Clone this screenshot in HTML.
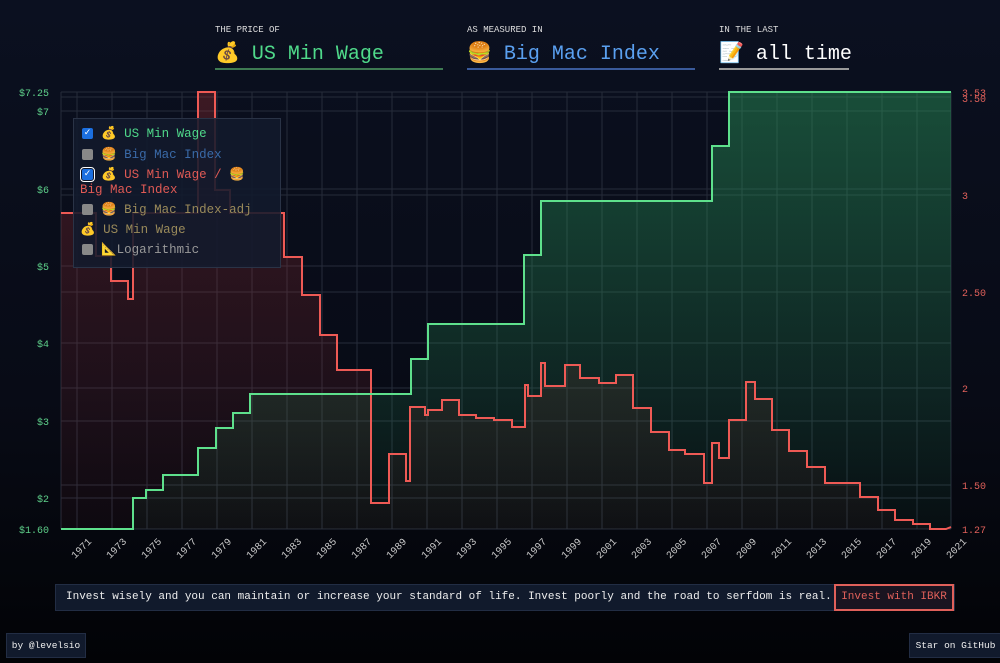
<!DOCTYPE html>
<html><head><meta charset="utf-8"><style>
html,body{margin:0;padding:0;width:1000px;height:663px;overflow:hidden;background:linear-gradient(#0b1020 0%,#080b16 60%,#020306 100%);font-family:"Liberation Mono",monospace;}
.lab{position:absolute;top:25px;font-size:9px;color:#ddd;}
.big{position:absolute;top:40px;font-size:20px;}
.ul{position:absolute;top:68px;height:2px;}
.leg{position:absolute;left:73px;top:118px;width:206px;height:148px;background:rgba(18,26,44,0.88);border:1px solid #2a3346;font-size:12.5px;}
.leg div{position:absolute;white-space:nowrap;}
.cb{display:inline-block;width:11px;height:11px;border-radius:2px;background:#888;vertical-align:middle;margin-right:8px;}
.cbon{background:#1b6fe0;color:#fff;font-size:9px;line-height:11px;text-align:center;}
.bar{position:absolute;left:55px;top:584px;width:898px;height:25px;background:#111a2c;border:1px solid #222d44;}
.bar span{position:absolute;left:10px;top:6px;font-size:11px;color:#eee;white-space:nowrap;}
.btn{position:absolute;right:0;top:-1px;height:23px;width:116px;border:2px solid #e0605a;color:#e0605a;font-size:11px;line-height:23px;text-align:center;background:#1a1420;}
.foot{position:absolute;top:633px;height:23px;background:#111a2c;border:1px solid #222d44;color:#eee;font-size:9.5px;line-height:23px;text-align:center;}
</style></head><body>
<div class="lab" style="left:215px">THE PRICE OF</div>
<div class="lab" style="left:467px">AS MEASURED IN</div>
<div class="lab" style="left:719px">IN THE LAST</div>
<div class="big" style="left:215px;color:#4fd98a">💰 US Min Wage</div>
<div class="big" style="left:467px;color:#5aa0f0">🍔 Big Mac Index</div>
<div class="big" style="left:719px;color:#fff">📝 all time</div>
<div class="ul" style="left:215px;width:228px;background:#3e7a52"></div>
<div class="ul" style="left:467px;width:228px;background:#3a5a9a"></div>
<div class="ul" style="left:719px;width:130px;background:#999"></div>

<svg width="1000" height="663" style="position:absolute;left:0;top:0" xmlns="http://www.w3.org/2000/svg">
<defs>
<linearGradient id="gg" x1="0" y1="0" x2="0" y2="1"><stop offset="0" stop-color="#2a9a5a" stop-opacity="0.45"/><stop offset="1" stop-color="#2a9a5a" stop-opacity="0.05"/></linearGradient>
<linearGradient id="rg" x1="0" y1="0" x2="0" y2="1"><stop offset="0" stop-color="#b03030" stop-opacity="0.3"/><stop offset="1" stop-color="#b03030" stop-opacity="0.05"/></linearGradient>
</defs>
<g stroke="#262c3a" stroke-width="1">
<line x1="61" y1="92" x2="951" y2="92"/><line x1="61" y1="97" x2="951" y2="97"/><line x1="61" y1="111" x2="951" y2="111"/><line x1="61" y1="189" x2="951" y2="189"/><line x1="61" y1="195" x2="951" y2="195"/><line x1="61" y1="266" x2="951" y2="266"/><line x1="61" y1="292" x2="951" y2="292"/><line x1="61" y1="343" x2="951" y2="343"/><line x1="61" y1="388" x2="951" y2="388"/><line x1="61" y1="421" x2="951" y2="421"/><line x1="61" y1="485" x2="951" y2="485"/><line x1="61" y1="498" x2="951" y2="498"/><line x1="61" y1="529" x2="951" y2="529"/>
<line x1="61" y1="92" x2="61" y2="529"/><line x1="951" y1="92" x2="951" y2="529"/>
<line x1="77" y1="92" x2="77" y2="529"/><line x1="112" y1="92" x2="112" y2="529"/><line x1="147" y1="92" x2="147" y2="529"/><line x1="182" y1="92" x2="182" y2="529"/><line x1="217" y1="92" x2="217" y2="529"/><line x1="252" y1="92" x2="252" y2="529"/><line x1="287" y1="92" x2="287" y2="529"/><line x1="322" y1="92" x2="322" y2="529"/><line x1="357" y1="92" x2="357" y2="529"/><line x1="392" y1="92" x2="392" y2="529"/><line x1="427" y1="92" x2="427" y2="529"/><line x1="462" y1="92" x2="462" y2="529"/><line x1="497" y1="92" x2="497" y2="529"/><line x1="532" y1="92" x2="532" y2="529"/><line x1="567" y1="92" x2="567" y2="529"/><line x1="602" y1="92" x2="602" y2="529"/><line x1="637" y1="92" x2="637" y2="529"/><line x1="672" y1="92" x2="672" y2="529"/><line x1="707" y1="92" x2="707" y2="529"/><line x1="742" y1="92" x2="742" y2="529"/><line x1="777" y1="92" x2="777" y2="529"/><line x1="812" y1="92" x2="812" y2="529"/><line x1="847" y1="92" x2="847" y2="529"/><line x1="882" y1="92" x2="882" y2="529"/><line x1="917" y1="92" x2="917" y2="529"/>
</g>
<path d="M61,213 H96 V256 H111 V281 H128 V299 H133 V213 H198 V92 H215 V190 H230 V213 H284 V257 H302 V295 H320 V335 H337 V370 H371 V503 H389 V454 H406 V481 H410 V407 H425 V415 H428 V410 H442 V400 H459 V415 H476 V418 H494 V420 H512 V427 H525 V385 H528 V396 H541 V363 H545 V386 H565 V365 H580 V378 H599 V383 H616 V375 H633 V408 H651 V432 H669 V450 H685 V454 H704 V483 H712 V443 H719 V458 H729 V420 H746 V382 H755 V399 H772 V430 H789 V451 H807 V467 H825 V483 H860 V497 H878 V510 H895 V520 H913 V524 H930 V529 H946 L951,527 V529 H61 Z" fill="url(#rg)" stroke="none"/>
<path d="M61,529 H133 V498 H146 V490 H163 V475 H198 V448 H216 V428 H233 V413 H250 V394 H411 V359 H428 V324 H524 V255 H541 V201 H712 V146 H729 V92 H951 V529 Z" fill="url(#gg)" stroke="none"/>
<path d="M61,213 H96 V256 H111 V281 H128 V299 H133 V213 H198 V92 H215 V190 H230 V213 H284 V257 H302 V295 H320 V335 H337 V370 H371 V503 H389 V454 H406 V481 H410 V407 H425 V415 H428 V410 H442 V400 H459 V415 H476 V418 H494 V420 H512 V427 H525 V385 H528 V396 H541 V363 H545 V386 H565 V365 H580 V378 H599 V383 H616 V375 H633 V408 H651 V432 H669 V450 H685 V454 H704 V483 H712 V443 H719 V458 H729 V420 H746 V382 H755 V399 H772 V430 H789 V451 H807 V467 H825 V483 H860 V497 H878 V510 H895 V520 H913 V524 H930 V529 H946 L951,527" fill="none" stroke="#ee5a55" stroke-width="2"/>
<path d="M61,529 H133 V498 H146 V490 H163 V475 H198 V448 H216 V428 H233 V413 H250 V394 H411 V359 H428 V324 H524 V255 H541 V201 H712 V146 H729 V92 H951" fill="none" stroke="#5ee08c" stroke-width="2"/>
<g font-family="Liberation Mono,monospace" font-size="10" fill="#5ed08a" text-anchor="end">
<text x="49" y="96">$7.25</text><text x="49" y="115">$7</text><text x="49" y="193">$6</text><text x="49" y="270">$5</text><text x="49" y="347">$4</text><text x="49" y="425">$3</text><text x="49" y="502">$2</text><text x="49" y="533">$1.60</text>
</g>
<g font-family="Liberation Mono,monospace" font-size="10" fill="#e0605a">
<text x="962" y="96">3.53</text><text x="962" y="102">3.50</text><text x="962" y="199">3</text><text x="962" y="296">2.50</text><text x="962" y="392">2</text><text x="962" y="489">1.50</text><text x="962" y="533">1.27</text>
</g>
<g font-family="Liberation Mono,monospace" font-size="10" fill="#ccc" text-anchor="end">
<text transform="translate(92,542) rotate(-45)">1971</text><text transform="translate(127,542) rotate(-45)">1973</text><text transform="translate(162,542) rotate(-45)">1975</text><text transform="translate(197,542) rotate(-45)">1977</text><text transform="translate(232,542) rotate(-45)">1979</text><text transform="translate(267,542) rotate(-45)">1981</text><text transform="translate(302,542) rotate(-45)">1983</text><text transform="translate(337,542) rotate(-45)">1985</text><text transform="translate(372,542) rotate(-45)">1987</text><text transform="translate(407,542) rotate(-45)">1989</text><text transform="translate(442,542) rotate(-45)">1991</text><text transform="translate(477,542) rotate(-45)">1993</text><text transform="translate(512,542) rotate(-45)">1995</text><text transform="translate(547,542) rotate(-45)">1997</text><text transform="translate(582,542) rotate(-45)">1999</text><text transform="translate(617,542) rotate(-45)">2001</text><text transform="translate(652,542) rotate(-45)">2003</text><text transform="translate(687,542) rotate(-45)">2005</text><text transform="translate(722,542) rotate(-45)">2007</text><text transform="translate(757,542) rotate(-45)">2009</text><text transform="translate(792,542) rotate(-45)">2011</text><text transform="translate(827,542) rotate(-45)">2013</text><text transform="translate(862,542) rotate(-45)">2015</text><text transform="translate(897,542) rotate(-45)">2017</text><text transform="translate(932,542) rotate(-45)">2019</text><text transform="translate(967,542) rotate(-45)">2021</text>
</g>
</svg>

<div class="leg">
<div style="left:8px;top:7px;color:#4fd98a"><span class="cb cbon">✓</span>💰 US Min Wage</div>
<div style="left:8px;top:28px;color:#3a6aa8"><span class="cb"></span>🍔 Big Mac Index</div>
<div style="left:8px;top:48px;color:#e05a55"><span class="cb cbon" style="outline:1px solid #fff;outline-offset:1px">✓</span>💰 US Min Wage / 🍔</div>
<div style="left:6px;top:64px;color:#e05a55">Big Mac Index</div>
<div style="left:8px;top:83px;color:#9a8a5a"><span class="cb"></span>🍔 Big Mac Index-adj</div>
<div style="left:6px;top:103px;color:#9a8a5a">💰 US Min Wage</div>
<div style="left:8px;top:123px;color:#999"><span class="cb"></span>📐Logarithmic</div>
</div>

<div class="bar"><span>Invest wisely and you can maintain or increase your standard of life. Invest poorly and the road to serfdom is real.</span><div class="btn">Invest with IBKR</div></div>
<div class="foot" style="left:6px;width:78px">by @levelsio</div>
<div class="foot" style="left:909px;width:91px">Star on GitHub</div>
</body></html>
